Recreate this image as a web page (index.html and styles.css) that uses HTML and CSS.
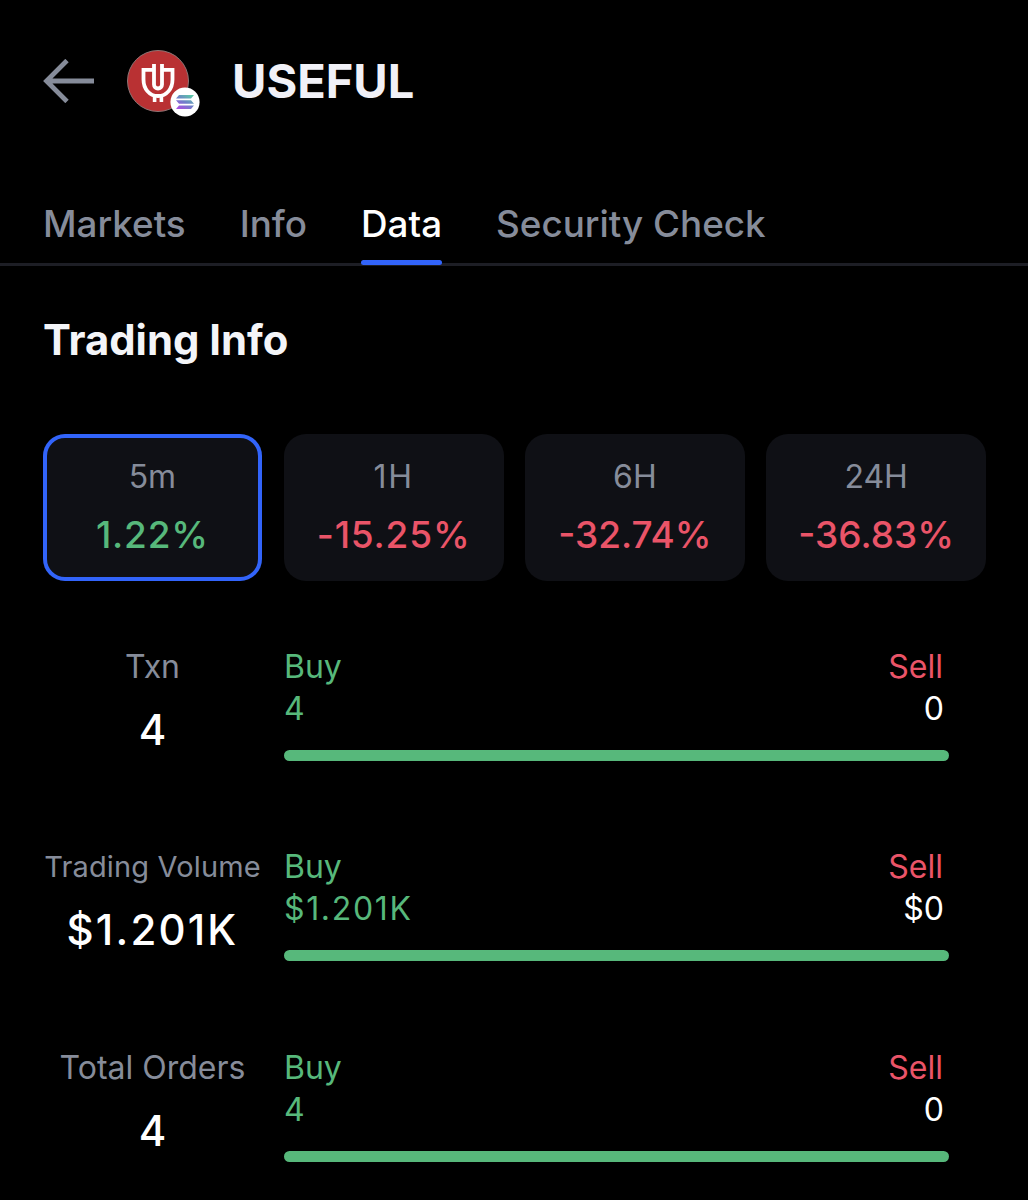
FILE: index.html
```
<!DOCTYPE html>
<html lang="en">
  <head>
    <meta charset="UTF-8">
    <title>USEFUL</title>
    <link rel="stylesheet" href="styles.css">
  </head>
  <body>
    <header class="header">
      <svg class="back" width="52" height="44" viewBox="0 0 52 44">
        <path d="M51 22H3M24 1.500L3.500 22 24 42.500" fill="none" stroke="#868c9a" stroke-width="4.800"/>
      </svg>
      <div class="token">
        <svg class="token-logo" width="62" height="62" viewBox="0 0 62 62">
          <circle cx="31" cy="31" r="30.500" fill="#b93133" stroke="#8d7474" stroke-width="1"/>
          <path d="M26 19.800H16.500V29.500C16.500 38.500 22 46 31 46S45.500 38.500 45.500 29.500V19.800H36" fill="none" stroke="#fff" stroke-width="3.800"/>
          <path d="M27 14V34.500a4 4 0 0 0 8 0V14" fill="none" stroke="#fff" stroke-width="3.800"/>
          <path d="M27.600 46v6M34.400 46v6" stroke="#fff" stroke-width="3.600"/>
        </svg>
        <svg class="chain-logo" width="30" height="30" viewBox="0 0 30 30">
          <defs>
            <linearGradient id="chain" gradientUnits="userSpaceOnUse" x1="20" y1="8" x2="11" y2="23">
              <stop offset="0" stop-color="#5cc6a8"/>
              <stop offset="0.500" stop-color="#6f7fc9"/>
              <stop offset="1" stop-color="#a84fe0"/>
            </linearGradient>
          </defs>
          <circle cx="15" cy="15" r="14.600" fill="#fff"/>
          <path d="M9 8h15l-3 3.500H6zM6 13.300h15l3 3.500H9zM9 18.600h15l-3 3.500H6z" fill="url(#chain)"/>
        </svg>
      </div>
      <h1 class="name">USEFUL</h1>
    </header>

    <nav class="tabs">
      <a class="tab">Markets</a>
      <a class="tab">Info</a>
      <a class="tab active">Data</a>
      <a class="tab">Security Check</a>
    </nav>

    <main class="content">
      <h2 class="title">Trading Info</h2>

      <div class="periods">
        <div class="period selected">
          <span class="period-label">5m</span>
          <span class="change up loose">1.22%</span>
        </div>
        <div class="period">
          <span class="period-label spaced">1H</span>
          <span class="change down loose">-15.25%</span>
        </div>
        <div class="period">
          <span class="period-label">6H</span>
          <span class="change down">-32.74%</span>
        </div>
        <div class="period">
          <span class="period-label">24H</span>
          <span class="change down">-36.83%</span>
        </div>
      </div>

      <div class="stat">
        <div class="total">
          <span class="total-label">Txn</span>
          <span class="total-value">4</span>
        </div>
        <div class="split">
          <div class="split-row"><span class="up">Buy</span><span class="down">Sell</span></div>
          <div class="split-row amounts"><span class="up">4</span><span>0</span></div>
          <div class="bar"><div class="bar-buy" style="width: 100%"></div></div>
        </div>
      </div>

      <div class="stat">
        <div class="total">
          <span class="total-label small">Trading Volume</span>
          <span class="total-value spaced">$1.201K</span>
        </div>
        <div class="split">
          <div class="split-row"><span class="up">Buy</span><span class="down">Sell</span></div>
          <div class="split-row amounts"><span class="up spaced">$1.201K</span><span>$0</span></div>
          <div class="bar"><div class="bar-buy" style="width: 100%"></div></div>
        </div>
      </div>

      <div class="stat">
        <div class="total">
          <span class="total-label">Total Orders</span>
          <span class="total-value">4</span>
        </div>
        <div class="split">
          <div class="split-row"><span class="up">Buy</span><span class="down">Sell</span></div>
          <div class="split-row amounts"><span class="up">4</span><span>0</span></div>
          <div class="bar"><div class="bar-buy" style="width: 100%"></div></div>
        </div>
      </div>
    </main>
  </body>
</html>
```
FILE: styles.css
```
* {
  box-sizing: border-box;
}

body {
  margin: 0;
  background: #000;
  color: #fff;
  font-family: Inter, "Liberation Sans", sans-serif;
  height: 1200px;
  overflow: hidden;
}

.header {
  display: flex;
  align-items: center;
  height: 162px;
  padding-left: 43px;
}

.back {
  margin-right: 32px;
}

.token {
  position: relative;
  width: 62px;
  height: 62px;
}

.token-logo {
  display: block;
}

/* chain badge sits over the token logo */
.chain-logo {
  position: absolute;
  left: 43px;
  top: 37px;
}

.name {
  margin: 0 0 0 43px;
  font-size: 47px;
  line-height: 60px;
  font-weight: 700;
  color: #f1f1f7;
}

.tabs {
  display: flex;
  gap: 54px;
  height: 104px;
  padding: 36px 43px 0;
  border-bottom: 3px solid #1d1e25;
}

.tab {
  position: relative;
  height: 68px;
  padding-top: 2px;
  font-size: 36.800px;
  line-height: 48px;
  font-weight: 500;
  color: #868c9a;
}

.tab.active {
  color: #fff;
}

.tab.active::after {
  content: "";
  position: absolute;
  left: 0;
  right: 0;
  bottom: 1px;
  height: 5px;
  border-radius: 3px;
  background: #3264fa;
}

.content {
  padding: 0 42px 0 42.500px;
}

.title {
  margin: 0;
  padding: 48px 0 0 0.500px;
  height: 168px;
  font-size: 41.800px;
  line-height: 52px;
  font-weight: 700;
  color: #f4f5f8;
}

.periods {
  display: grid;
  grid-template-columns: repeat(4, 1fr);
  gap: 21.500px;
}

.period {
  display: flex;
  flex-direction: column;
  align-items: center;
  height: 147px;
  padding-top: 23px;
  border-radius: 22px;
  background: #0f1015;
}

.period.selected {
  box-shadow: inset 0 0 0 4px #3264fa;
}

.period-label {
  font-size: 32px;
  line-height: 40px;
  color: #868c9a;
}

.change {
  margin-top: 14px;
  font-size: 37px;
  line-height: 48px;
  font-weight: 450;
}

.loose {
  letter-spacing: 0.022em;
}

.spaced {
  letter-spacing: 0.052em;
}

.up {
  color: #57b87b;
}

.down {
  color: #ea5468;
}

.stat {
  display: flex;
  height: 200px;
  margin-bottom: 0.300px;
}

.periods + .stat {
  margin-top: 64px;
}

.total {
  display: flex;
  flex-direction: column;
  align-items: center;
  width: 220px;
  margin-right: 21.500px;
}

.total-label {
  padding-top: 1px;
  font-size: 32px;
  line-height: 42px;
  color: #868c9a;
  white-space: nowrap;
}

.total-label.small {
  font-size: 29px;
  letter-spacing: 0.150px;
}

.total-value {
  margin-top: 16px;
  font-size: 42px;
  line-height: 52px;
  font-weight: 500;
}

.split {
  width: 665px;
  padding-top: 1px;
}

.split-row {
  display: flex;
  justify-content: space-between;
  padding-right: 6px;
  font-size: 32px;
  line-height: 42px;
}

.split-row.amounts {
  padding-right: 5px;
}

.bar {
  height: 11px;
  margin-top: 20px;
  border-radius: 6px;
  background: #ea5468;
  overflow: hidden;
}

.bar-buy {
  height: 100%;
  background: #57b87b;
}
```
